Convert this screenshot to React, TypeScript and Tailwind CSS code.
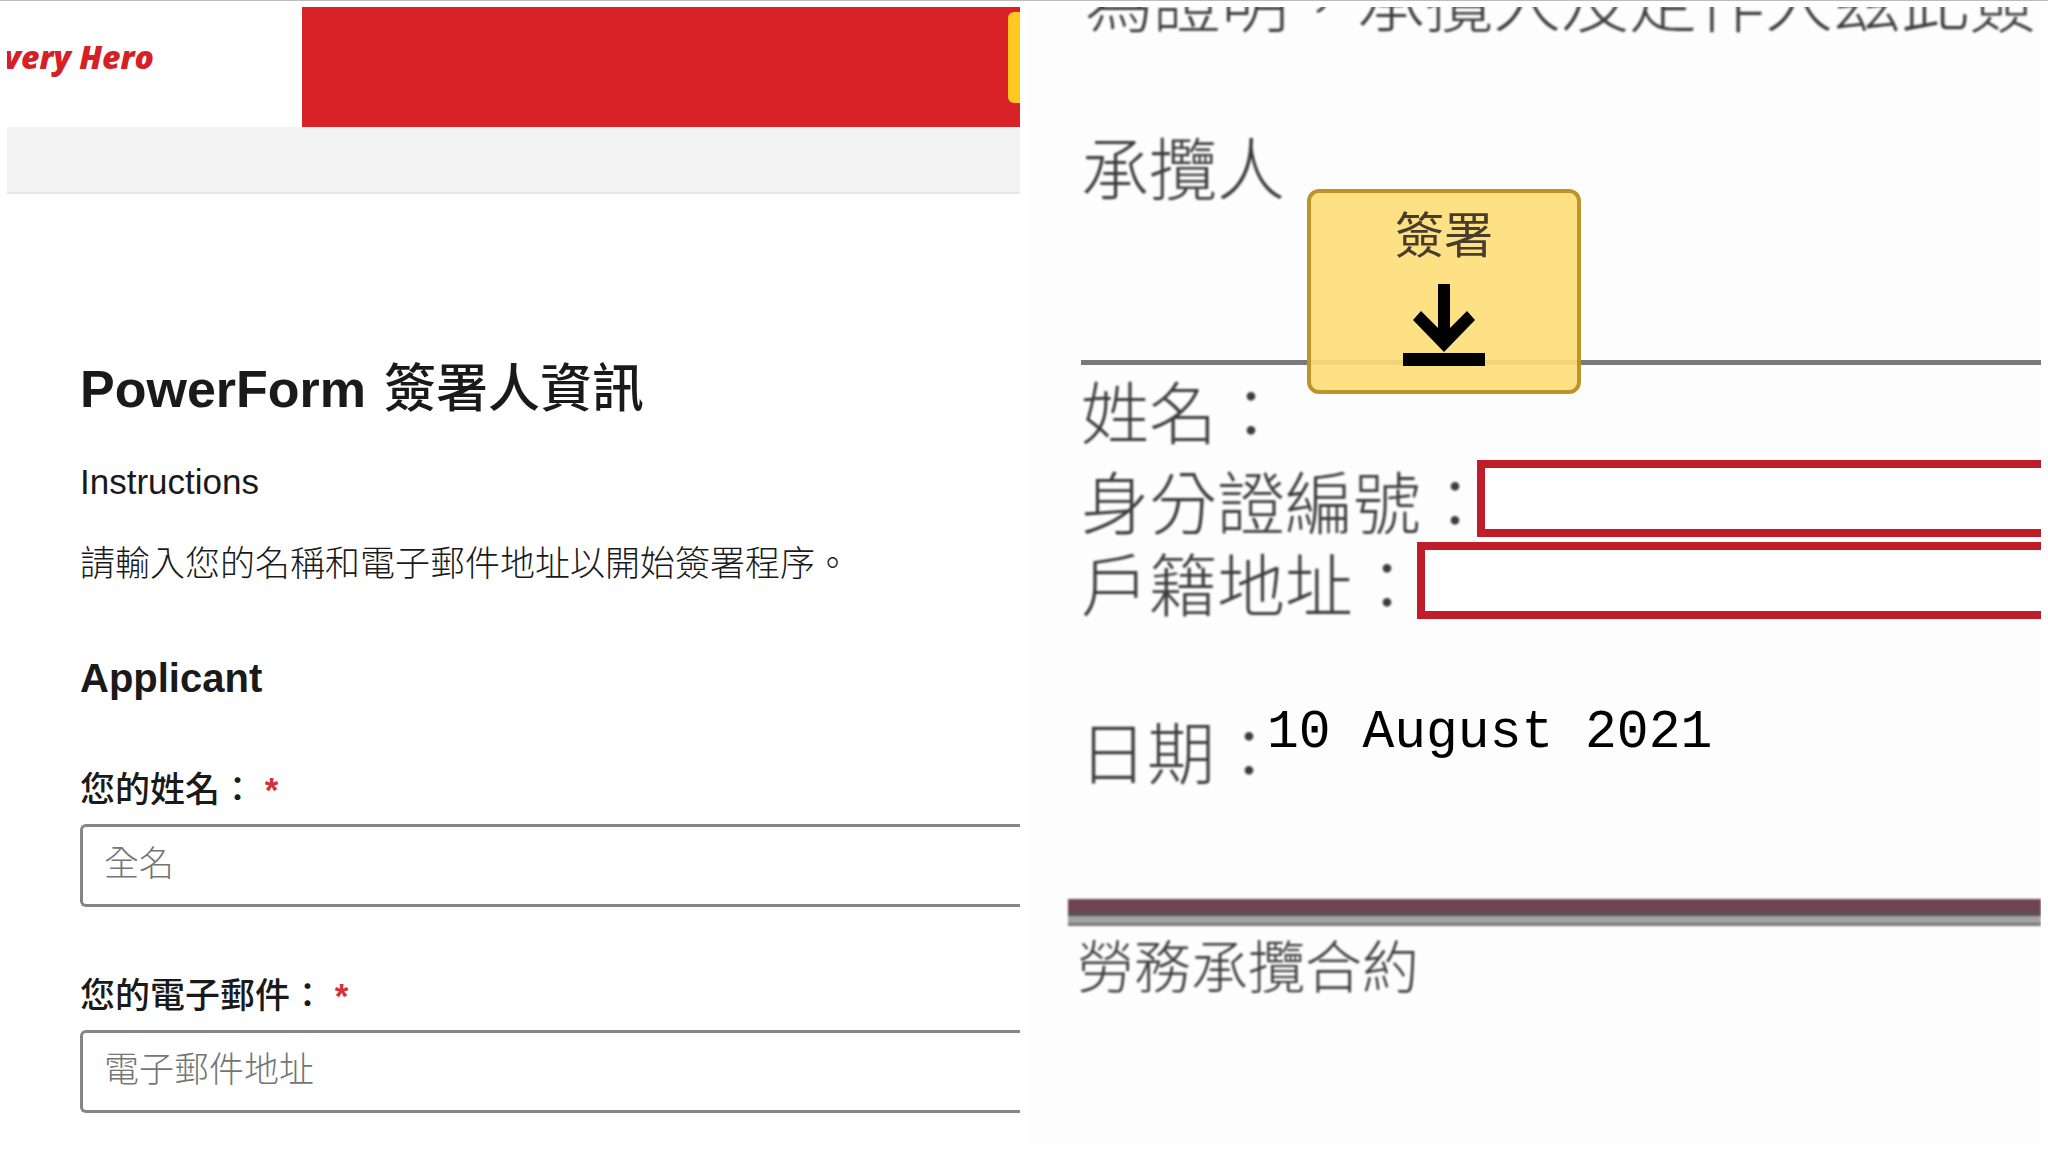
import type { ReactNode } from "react";

const signerFields = [
  { id: "signer-name", label: "您的姓名：", placeholder: "全名", type: "text" },
  { id: "signer-email", label: "您的電子郵件：", placeholder: "電子郵件地址", type: "email" },
];

const contractFields = [
  { id: "id-number", label: "身分證編號：", spacing: "-mr-3" },
  { id: "address", label: "戶籍地址：", spacing: "-mr-1" },
];

function SignerField({ field }: { field: (typeof signerFields)[number] }) {
  return (
    <div className="flex flex-col">
      <label htmlFor={field.id} className="text-[35px] leading-[48px] font-medium">
        {field.label} <span className="font-bold text-[#d13239]">*</span>
      </label>
      <input
        id={field.id}
        type={field.type}
        placeholder={field.placeholder}
        className="mt-[10px] h-[83px] w-full rounded-l-md border-[3px] border-r-0 border-[#858585] bg-white px-[21px] pb-1 text-[35px] font-light placeholder:text-[#757575] outline-none"
      />
    </div>
  );
}

// Printed text of the scanned contract
function Scanned({ children }: { children: ReactNode }) {
  return <span className="font-light text-[#3c3c3c] blur-[1px] whitespace-nowrap">{children}</span>;
}

function PowerForm() {
  return (
    <section className="overflow-hidden bg-white">
      <header className="flex h-[120px]">
        <div className="flex w-[295px] shrink-0 items-start pt-[26px]">
          <div className="flex w-[147px] justify-end overflow-hidden">
            <span className="font-['Open_Sans'] text-[32px] leading-[48px] font-extrabold italic text-[#d61f26] whitespace-nowrap">
              very Hero
            </span>
          </div>
        </div>
        <div className="flex flex-1 items-start justify-end bg-[#d92128] pt-[5px]">
          <button type="button" aria-label="menu" className="h-[91px] w-3 rounded-l-md bg-[#ffc820]" />
        </div>
      </header>
      <div className="h-[67px] border-b-2 border-[#e6e6e6] bg-[#f3f3f3]" />

      <form className="pt-[163px] pl-[73px] text-[#1a1a1a]">
        <h1 className="flex gap-[18px] text-[52px] leading-[64px]">
          <span className="font-bold">PowerForm</span>
          <span className="font-medium">簽署人資訊</span>
        </h1>
        <p className="mt-[37px] text-[35px] leading-[48px]">Instructions</p>
        <p className="mt-[34px] text-[35px] leading-[48px] font-light">
          請輸入您的名稱和電子郵件地址以開始簽署程序。
        </p>
        <h2 className="mt-[62px] text-[40px] leading-[56px] font-bold">Applicant</h2>
        <div className="mt-[60px] flex flex-col gap-[65px]">
          {signerFields.map((field) => (
            <SignerField key={field.id} field={field} />
          ))}
        </div>
      </form>
    </section>
  );
}

function SignTag() {
  return (
    <button
      type="button"
      className="absolute top-[52px] left-[226px] flex h-[205px] w-[274px] flex-col items-center rounded-xl border-4 border-[#bd942a] bg-[#fedd78]/90 pt-[15px] text-[49px] leading-[56px] text-[#463d2c]"
    >
      簽署
      <svg viewBox="0 0 82 82" className="mt-5 h-[82px] w-[82px]" fill="#000">
        <path d="M35 0h12v44l17-17 8 9-31 32-31-32 8-9 17 17z" />
        <path d="M0 69h82v13H0z" />
      </svg>
    </button>
  );
}

function Contract() {
  return (
    <section className="overflow-hidden bg-[#fdfdfd] text-[68px] leading-[68px]">
      <div className="flex h-[30px] items-end overflow-hidden pl-[57px]">
        <Scanned>為證明，承攬人及定作人茲此簽</Scanned>
      </div>

      <div className="relative mt-[100px] ml-[53px] h-[228px] border-b-[5px] border-[#7a7a7a]">
        <Scanned>承攬人</Scanned>
        <SignTag />
      </div>

      <div className="mt-[16px] ml-[53px] flex h-[79px] items-start">
        <Scanned>姓名：</Scanned>
      </div>
      <div className="ml-[53px] flex flex-col gap-[5px]">
        {contractFields.map(({ id, label, spacing }) => (
          <div key={id} className="flex h-[77px] items-center">
            <label htmlFor={id} className={`pt-3 ${spacing}`}>
              <Scanned>{label}</Scanned>
            </label>
            <input
              id={id}
              type="text"
              className="relative h-full min-w-0 flex-1 border-8 border-r-0 border-[#c01d2b] bg-white px-4 text-[49px] outline-none"
            />
          </div>
        ))}
      </div>

      <div className="mt-[94px] ml-[51px] flex items-start">
        <span className="pt-2">
          <Scanned>日期：</Scanned>
        </span>
        <time
          dateTime="2021-08-10"
          className="-ml-4 font-['Liberation_Mono'] text-[53px] leading-[40px] text-black"
        >
          10 August 2021
        </time>
      </div>

      <div className="mt-[110px] ml-10 flex flex-col blur-[1px]">
        <div className="h-[13px] bg-[#6f4452]" />
        <div className="h-1 bg-[#555]" />
        <div className="h-[7px] bg-[#a3a3a3]" />
        <div className="h-[3px] bg-[#777]" />
      </div>
      <footer className="mt-2 pl-[49px] text-[57px]">
        <Scanned>勞務承攬合約</Scanned>
      </footer>
    </section>
  );
}

export default function App() {
  return (
    <main
      lang="zh-TW"
      className="grid min-h-screen grid-cols-2 gap-2 border-t border-[#bcbcbc] bg-white px-[7px] pt-[6px] pb-2 font-['Liberation_Sans','Noto_Sans_CJK_TC',sans-serif]"
    >
      <PowerForm />
      <Contract />
    </main>
  );
}
